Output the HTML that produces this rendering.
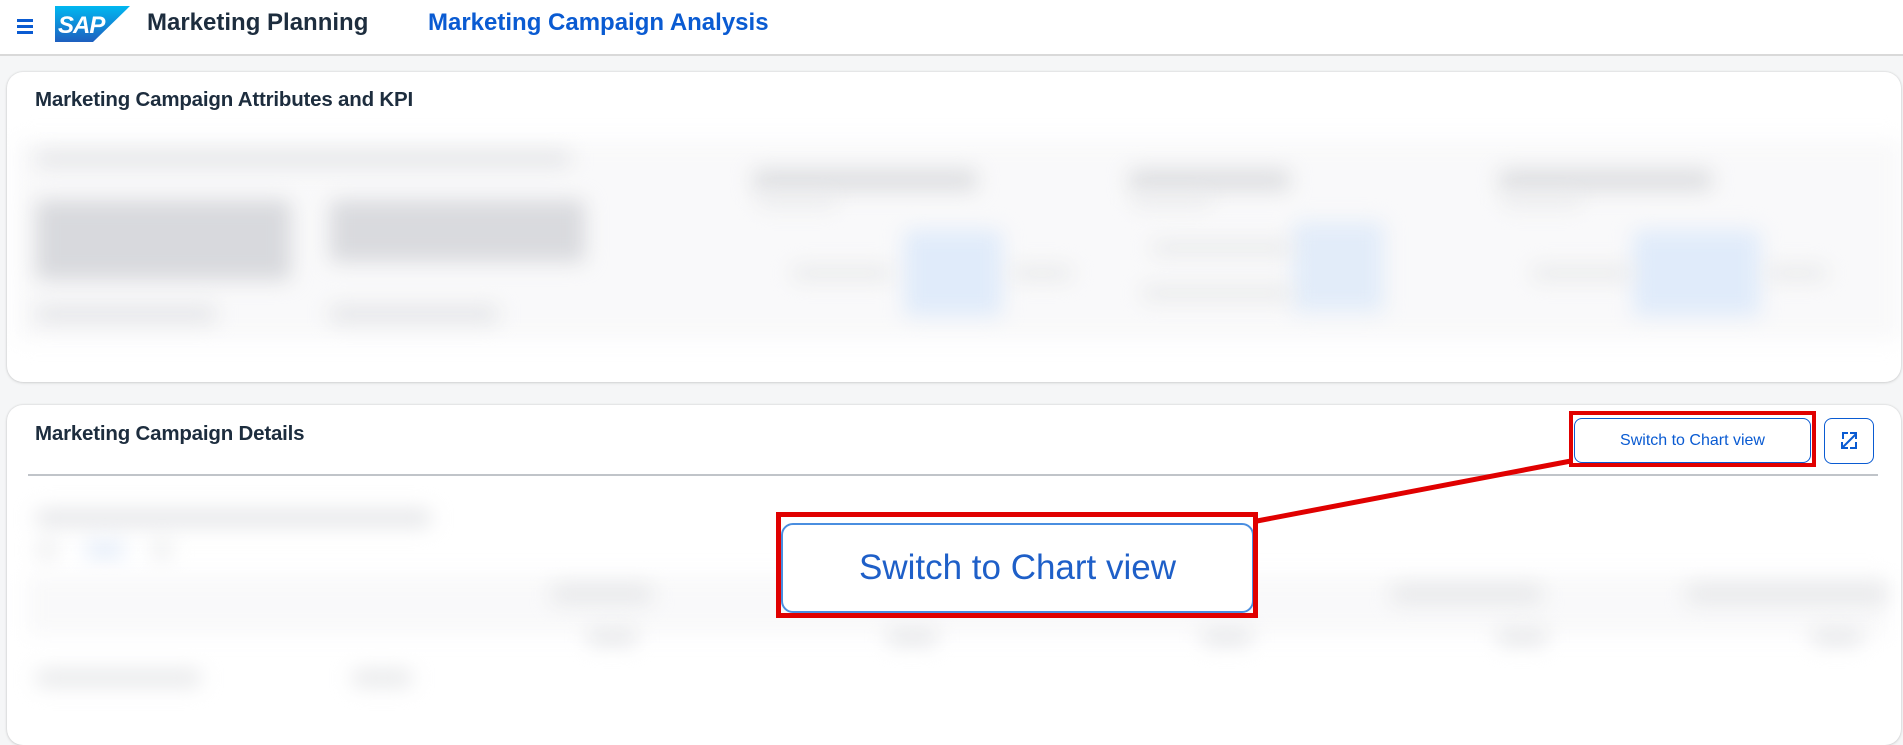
<!DOCTYPE html>
<html><head><meta charset="utf-8"><style>
*{box-sizing:border-box;margin:0;padding:0}
body{width:1903px;height:729px;overflow:hidden;background:#f5f6f7;font-family:"Liberation Sans",sans-serif;position:relative}
.hdr{position:absolute;left:0;top:0;width:1903px;height:56px;background:#fff;border-bottom:2px solid #d9d9d9}
.card{position:absolute;background:#fff;border-radius:16px;box-shadow:0 0 2px rgba(0,0,0,.15),0 1px 3px rgba(0,0,0,.1)}
.b{position:absolute;filter:blur(10px);border-radius:6px}
.t{position:absolute;font-weight:bold;color:#1d2d3e;font-size:20.5px;letter-spacing:-0.2px}
</style></head><body>
<div class="hdr">
 <div style="position:absolute;left:17px;top:19px;width:16px">
  <div style="height:3px;background:#0a5bd2;margin-bottom:3px"></div><div style="height:3px;background:#0a5bd2;margin-bottom:3px"></div><div style="height:3px;background:#0a5bd2"></div>
 </div>
 <svg style="position:absolute;left:55px;top:6px" width="75" height="36" viewBox="0 0 75 36"><defs><linearGradient id="g" x1="0" y1="0" x2="0" y2="1"><stop offset="0" stop-color="#00b8f1"/><stop offset="1" stop-color="#1e5fbf"/></linearGradient></defs><polygon points="0,0 75,0 38,36 0,36" fill="url(#g)"/><text x="3" y="27" font-family="Liberation Sans" font-weight="bold" font-style="italic" font-size="24" fill="#fff" letter-spacing="-1">SAP</text></svg>
 <div style="position:absolute;left:147px;top:9px;font-size:24px;font-weight:bold;color:#1d2d3e">Marketing Planning</div>
 <div style="position:absolute;left:428px;top:9px;font-size:24px;font-weight:bold;color:#0a5bd2">Marketing Campaign Analysis</div>
</div>

<div class="card" style="left:7px;top:72px;width:1894px;height:310px;overflow:hidden">
 <div class="t" style="left:28px;top:16px">Marketing Campaign Attributes and KPI</div>
 <div style="position:absolute;left:10px;top:68px;width:1884px;height:200px;background:#f9f9fa;filter:blur(10px)"></div>
 <div class="b" style="left:29px;top:80px;width:535px;height:14px;background:#e2e3e6"></div>
 <div class="b" style="left:29px;top:128px;width:255px;height:80px;background:#d8d9dd"></div>
 <div class="b" style="left:323px;top:128px;width:255px;height:62px;background:#d9dade"></div>
 <div class="b" style="left:29px;top:234px;width:180px;height:16px;background:#e3e4e7"></div>
 <div class="b" style="left:323px;top:234px;width:168px;height:16px;background:#e3e4e7"></div>
 <div class="b" style="left:746px;top:98px;width:224px;height:20px;background:#dcdde0"></div>
 <div class="b" style="left:1122px;top:98px;width:161px;height:20px;background:#dcdde0"></div>
 <div class="b" style="left:1492px;top:98px;width:213px;height:20px;background:#dcdde0"></div>
 <div class="b" style="left:750px;top:124px;width:80px;height:10px;background:#e8e9eb"></div>
 <div class="b" style="left:1125px;top:124px;width:80px;height:10px;background:#e8e9eb"></div>
 <div class="b" style="left:1495px;top:124px;width:80px;height:10px;background:#e8e9eb"></div>
 <div class="b" style="left:897px;top:158px;width:98px;height:86px;background:#e0ebfa"></div>
 <div class="b" style="left:1286px;top:150px;width:91px;height:90px;background:#e2ecf9"></div>
 <div class="b" style="left:1626px;top:158px;width:127px;height:86px;background:#e0ebfa"></div>
 <div class="b" style="left:785px;top:195px;width:100px;height:12px;background:#e6e7e9"></div>
 <div class="b" style="left:1005px;top:195px;width:60px;height:12px;background:#e6e7e9"></div>
 <div class="b" style="left:1145px;top:170px;width:140px;height:12px;background:#e6e7e9"></div>
 <div class="b" style="left:1135px;top:215px;width:150px;height:12px;background:#e6e7e9"></div>
 <div class="b" style="left:1525px;top:195px;width:100px;height:12px;background:#e6e7e9"></div>
 <div class="b" style="left:1760px;top:195px;width:60px;height:12px;background:#e6e7e9"></div>
</div>

<div class="card" style="left:7px;top:405px;width:1894px;height:340px;overflow:hidden">
 <div class="t" style="left:28px;top:17px">Marketing Campaign Details</div>
 <div style="position:absolute;left:21px;top:69px;width:1850px;height:2px;background:#c0c4c9"></div>
 <div class="b" style="left:29px;top:105px;width:395px;height:16px;background:#e3e4e7"></div>
 <div class="b" style="left:30px;top:138px;width:20px;height:14px;background:#e6e7e9"></div>
 <div class="b" style="left:78px;top:138px;width:40px;height:14px;background:#dfe9f8"></div>
 <div class="b" style="left:145px;top:138px;width:20px;height:14px;background:#e6e7e9"></div>
 <div style="position:absolute;left:20px;top:170px;width:1860px;height:60px;background:#f9f9fa;filter:blur(10px)"></div>
 <div class="b" style="left:545px;top:180px;width:100px;height:18px;background:#e6e7e9"></div>
 <div class="b" style="left:1385px;top:180px;width:150px;height:18px;background:#e6e7e9"></div>
 <div class="b" style="left:1680px;top:180px;width:200px;height:18px;background:#e6e7e9"></div>
 <div class="b" style="left:580px;top:225px;width:50px;height:14px;background:#e3e4e7"></div>
 <div class="b" style="left:880px;top:225px;width:50px;height:14px;background:#e3e4e7"></div>
 <div class="b" style="left:1195px;top:225px;width:50px;height:14px;background:#e3e4e7"></div>
 <div class="b" style="left:1490px;top:225px;width:50px;height:14px;background:#e3e4e7"></div>
 <div class="b" style="left:1805px;top:225px;width:50px;height:14px;background:#e3e4e7"></div>
 <div class="b" style="left:29px;top:265px;width:165px;height:16px;background:#e6e7e9"></div>
 <div class="b" style="left:345px;top:265px;width:60px;height:16px;background:#e6e7e9"></div>
</div>

<div style="position:absolute;left:1574px;top:418px;width:237px;height:45px;border:1px solid #0a5bd2;border-radius:8px;background:#fff;color:#0a5bd2;font-size:16px;text-align:center;line-height:43px">Switch to Chart view</div>
<div style="position:absolute;left:1569px;top:411px;width:247px;height:56px;border:4px solid #e00000"></div>
<div style="position:absolute;left:1824px;top:418px;width:50px;height:46px;border:1px solid #0a5bd2;border-radius:8px;background:#fff">
 <svg width="48" height="44" viewBox="0 0 48 44"><g fill="none" stroke="#0a5bd2" stroke-width="2"><path d="M18 20v-6h5M25 14h6v6M31 23v6h-6M23 29h-6v-6M21 25l10-10M17 29l6-6"/></g></svg>
</div>

<svg style="position:absolute;left:0;top:0" width="1903" height="729"><line x1="1257" y1="521" x2="1571" y2="461" stroke="#e00000" stroke-width="5"/></svg>

<div style="position:absolute;left:781px;top:523px;width:473px;height:90px;border:2px solid #4a8ee0;border-radius:12px;background:#fff;color:#1e5fc8;font-size:35px;text-align:center;line-height:86px">Switch to Chart view</div>
<div style="position:absolute;left:776px;top:512px;width:482px;height:106px;border:5px solid #e00000"></div>
</body></html>
